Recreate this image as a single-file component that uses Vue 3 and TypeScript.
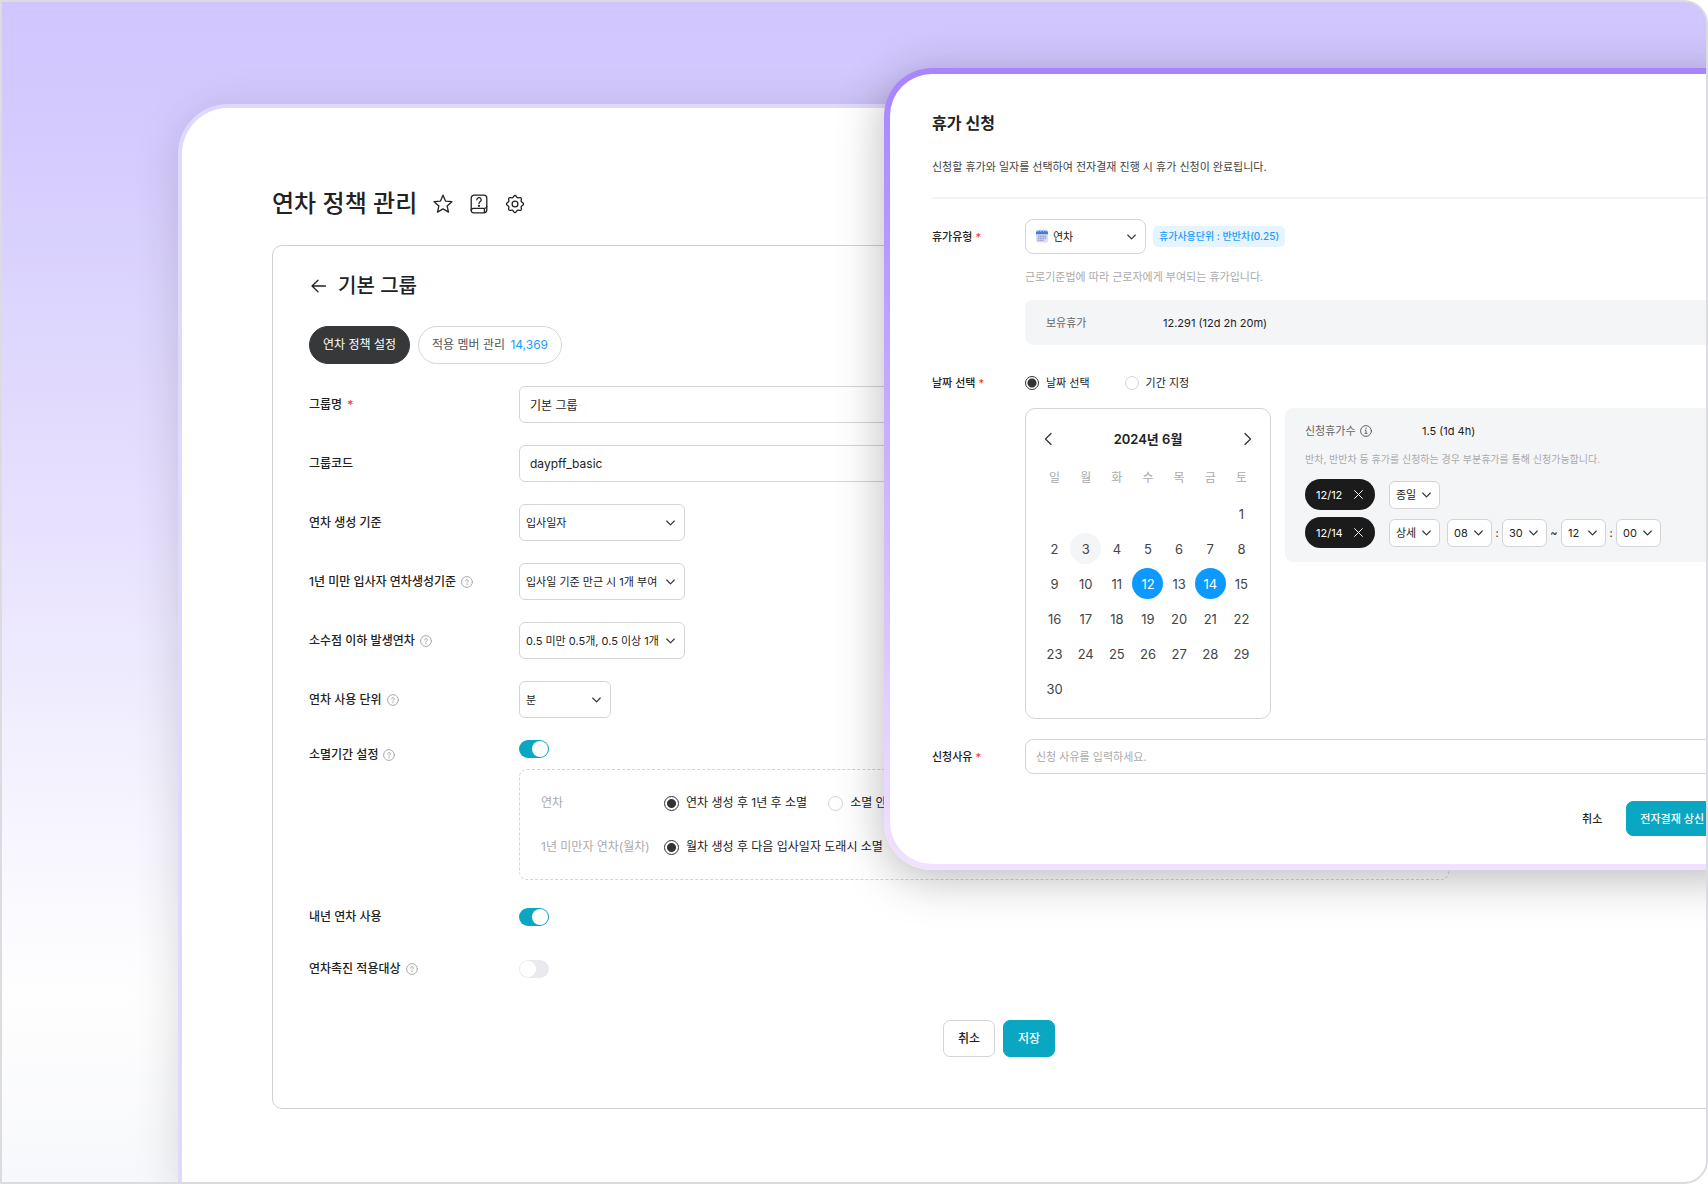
<script setup lang="ts">
import { ref } from 'vue'

interface SelectRow {
  id: string
  label: string
  value: string
  size: string
  help: boolean
}

interface DayCell {
  day: number
  state: '' | 'today' | 'picked'
}

const groupName = ref('기본 그룹')
const groupCode = ref('daypff_basic')
const expiry = ref(true)
const nextYear = ref(true)
const promotion = ref(false)
const reason = ref('')

const selectRows: SelectRow[] = [
  { id: 'basis', label: '연차 생성 기준', value: '입사일자', size: 'wide', help: false },
  { id: 'first-year', label: '1년 미만 입사자 연차생성기준', value: '입사일 기준 만근 시 1개 부여', size: 'wide', help: true },
  { id: 'decimal', label: '소수점 이하 발생연차', value: '0.5 미만 0.5개, 0.5 이상 1개', size: 'wide', help: true },
  { id: 'unit', label: '연차 사용 단위', value: '분', size: 'narrow', help: true },
]

// Outline of the settings gear: a circle whose radius swells into eight soft teeth.
const gearPoints: string[] = []
for (let step = 0; step < 96; step++) {
  const angle = (step / 96) * Math.PI * 2
  const radius = 7.6 + 0.9 * Math.cos(8 * angle)
  gearPoints.push(`${(10 + radius * Math.cos(angle)).toFixed(2)},${(10 + radius * Math.sin(angle)).toFixed(2)}`)
}
const gear = gearPoints.join(' ')

const weekdays = ['일', '월', '화', '수', '목', '금', '토']
const today = 3
const picked = [12, 14]

const weeks: (DayCell | null)[][] = []
for (let start = -5; start <= 30; start += 7) {
  const week: (DayCell | null)[] = []
  for (let day = start; day < start + 7; day++) {
    week.push(
      day < 1 || day > 30
        ? null
        : { day, state: picked.includes(day) ? 'picked' : day === today ? 'today' : '' },
    )
  }
  weeks.push(week)
}
</script>

<template>
  <div class="stage">
    <main class="panel">
      <header class="page-head">
        <h1>연차 정책 관리</h1>
        <button type="button" class="icon-btn" aria-label="즐겨찾기">
          <svg width="20" height="20" viewBox="0 0 20 20">
            <path d="M10 1.200l2.500 5.900 6.400.6-4.800 4.200 1.400 6.200L10 14.900 4.500 18.100l1.400-6.200L1.100 7.700l6.400-.6z" />
          </svg>
        </button>
        <button type="button" class="icon-btn" aria-label="도움말">
          <svg width="20" height="20" viewBox="0 0 20 20">
            <path d="M5.200 1.200h9.600a3 3 0 0 1 3 3v11.600a3 3 0 0 1-3 3H4.400a2.200 2.200 0 0 1-2.200-2.200V4.200a3 3 0 0 1 3-3z" />
            <path d="M2.200 16.600a2.200 2.200 0 0 1 2.200-2.200h10.800a2.600 2.600 0 0 0 2.600-2M15.400 14.500v4" />
            <path d="M7.800 5.800a2.200 2.200 0 1 1 3.300 1.900c-.8.500-1.100.8-1.100 1.700" />
            <circle cx="10" cy="11.800" r=".5" fill="#222" />
          </svg>
        </button>
        <button type="button" class="icon-btn" aria-label="설정">
          <svg width="20" height="20" viewBox="0 0 20 20">
            <polygon :points="gear" />
            <circle cx="10" cy="10" r="2.900" />
          </svg>
        </button>
      </header>

      <section class="card">
        <div class="card-head">
          <button type="button" class="icon-btn" aria-label="뒤로">
            <svg width="18" height="18" viewBox="0 0 18 18"><path d="M16.500 9H3M9 3.200L3 9l6 5.800" /></svg>
          </button>
          <h2>기본 그룹</h2>
        </div>

        <nav class="tabs">
          <button type="button" class="tab active">연차 정책 설정</button>
          <button type="button" class="tab">적용 멤버 관리 <span class="count">14,369</span></button>
        </nav>

        <form class="form" @submit.prevent>
          <div class="row">
            <label for="group-name">그룹명 <span class="req">*</span></label>
            <input id="group-name" v-model="groupName" type="text" class="field" />
          </div>
          <div class="row">
            <label for="group-code">그룹코드</label>
            <input id="group-code" v-model="groupCode" type="text" class="field" />
          </div>
          <div v-for="item in selectRows" :key="item.id" class="row">
            <label :for="item.id">
              {{ item.label }}
              <svg v-if="item.help" class="help" width="12" height="12" viewBox="0 0 12 12">
                <circle cx="6" cy="6" r="5.400" />
                <path d="M4.700 5a1.300 1.300 0 1 1 1.900 1.100c-.5.300-.6.500-.6.900M6 8.200v.7" />
              </svg>
            </label>
            <span class="select" :class="item.size">
              <select :id="item.id"><option>{{ item.value }}</option></select>
              <svg class="chev" width="9" height="6" viewBox="0 0 10 6"><path d="M.8.800L5 5 9.200.800" /></svg>
            </span>
          </div>

          <div class="row top">
            <label for="expiry">
              소멸기간 설정
              <svg class="help" width="12" height="12" viewBox="0 0 12 12">
                <circle cx="6" cy="6" r="5.400" />
                <path d="M4.700 5a1.300 1.300 0 1 1 1.900 1.100c-.5.300-.6.500-.6.900M6 8.200v.7" />
              </svg>
            </label>
            <div class="stack">
              <input id="expiry" v-model="expiry" type="checkbox" role="switch" class="toggle" />
              <div class="expiry-box">
                <div class="expiry-row" role="radiogroup" aria-label="연차">
                  <span class="expiry-name">연차</span>
                  <label class="radio"><input type="radio" name="annual" checked />연차 생성 후 1년 후 소멸</label>
                  <label class="radio"><input type="radio" name="annual" />소멸 안함</label>
                </div>
                <div class="expiry-row" role="radiogroup" aria-label="월차">
                  <span class="expiry-name">1년 미만자 연차(월차)</span>
                  <label class="radio"><input type="radio" name="monthly" checked />월차 생성 후 다음 입사일자 도래시 소멸</label>
                </div>
              </div>
            </div>
          </div>

          <div class="row switch-row">
            <label for="next-year">내년 연차 사용</label>
            <input id="next-year" v-model="nextYear" type="checkbox" role="switch" class="toggle" />
          </div>
          <div class="row switch-row">
            <label for="promotion">
              연차촉진 적용대상
              <svg class="help" width="12" height="12" viewBox="0 0 12 12">
                <circle cx="6" cy="6" r="5.400" />
                <path d="M4.700 5a1.300 1.300 0 1 1 1.900 1.100c-.5.300-.6.500-.6.900M6 8.200v.7" />
              </svg>
            </label>
            <input id="promotion" v-model="promotion" type="checkbox" role="switch" class="toggle" />
          </div>

          <div class="actions">
            <button type="button" class="btn">취소</button>
            <button type="submit" class="btn primary">저장</button>
          </div>
        </form>
      </section>
    </main>

    <section class="modal" role="dialog" aria-labelledby="modal-title">
      <h2 id="modal-title">휴가 신청</h2>
      <p class="lead">신청할 휴가와 일자를 선택하여 전자결재 진행 시 휴가 신청이 완료됩니다.</p>
      <hr />

      <form @submit.prevent>
        <div class="m-row type-row">
          <label for="leave-type" class="m-label">휴가유형<span class="req">*</span></label>
          <div class="m-body">
            <div class="type-line">
              <span class="select type">
                <svg class="emoji" width="14" height="14" viewBox="0 0 14 14">
                  <rect x="1" y="2" width="12" height="11.500" rx="2" fill="#dcdcf2" />
                  <path d="M1 5.200V3.500A2 2 0 0 1 3 1.500h8a2 2 0 0 1 2 2v1.700z" fill="#3f7fe0" />
                  <path d="M3 1v1.600M5.600 1v1.600M8.400 1v1.600M11 1v1.600" stroke="#b9c6e6" stroke-width=".8" />
                  <path d="M3.200 7.200h7.800M3.200 9.200h7.800M3.200 11.200h5.200" stroke="#8188c4" stroke-width="1" stroke-dasharray="1 1.200" />
                </svg>
                <select id="leave-type"><option>연차</option></select>
                <svg class="chev" width="9" height="6" viewBox="0 0 10 6"><path d="M.8.800L5 5 9.200.800" /></svg>
              </span>
              <span class="badge">휴가사용단위 : 반반차(0.25)</span>
            </div>
            <p class="hint">근로기준법에 따라 근로자에게 부여되는 휴가입니다.</p>
            <dl class="balance">
              <dt>보유휴가</dt>
              <dd>12.291 (12d 2h 20m)</dd>
            </dl>
          </div>
        </div>

        <div class="m-row date-row">
          <span id="date-label" class="m-label short">날짜 선택<span class="req">*</span></span>
          <div class="m-body">
            <div class="date-mode" role="radiogroup" aria-labelledby="date-label">
              <label class="radio"><input type="radio" name="mode" checked />날짜 선택</label>
              <label class="radio"><input type="radio" name="mode" />기간 지정</label>
            </div>
            <div class="date-area">
              <div class="calendar">
                <div class="cal-head">
                  <button type="button" aria-label="이전 달">
                    <svg width="8" height="14" viewBox="0 0 8 14"><path d="M7 1.500L1.500 7 7 12.500" /></svg>
                  </button>
                  <strong>2024년 6월</strong>
                  <button type="button" aria-label="다음 달">
                    <svg width="8" height="14" viewBox="0 0 8 14"><path d="M1 1.500L6.500 7 1 12.500" /></svg>
                  </button>
                </div>
                <table>
                  <thead>
                    <tr><th v-for="name in weekdays" :key="name" scope="col">{{ name }}</th></tr>
                  </thead>
                  <tbody>
                    <tr v-for="(week, w) in weeks" :key="w">
                      <td v-for="(cell, d) in week" :key="d">
                        <button v-if="cell" type="button" class="day" :class="cell.state">{{ cell.day }}</button>
                      </td>
                    </tr>
                  </tbody>
                </table>
              </div>

              <div class="summary">
                <dl>
                  <dt>
                    신청휴가수
                    <svg class="info" width="12" height="12" viewBox="0 0 12 12">
                      <circle cx="6" cy="6" r="5.400" />
                      <path d="M5.200 5.300H6v3M5 8.400h2M6 3.100v.8" />
                    </svg>
                  </dt>
                  <dd>1.5 (1d 4h)</dd>
                </dl>
                <p>반차, 반반차 등 휴가를 신청하는 경우 부분휴가를 통해 신청가능합니다.</p>
                <div class="slot">
                  <button type="button" class="chip">
                    12/12<svg width="9" height="9" viewBox="0 0 9 9"><path d="M.6.600l7.800 7.800M8.400.600L.6 8.400" /></svg>
                  </button>
                  <span class="select mini kind">
                    <select aria-label="12/12 구분"><option>종일</option></select>
                    <svg class="chev" width="9" height="6" viewBox="0 0 10 6"><path d="M.8.800L5 5 9.200.800" /></svg>
                  </span>
                </div>
                <div class="slot">
                  <button type="button" class="chip">
                    12/14<svg width="9" height="9" viewBox="0 0 9 9"><path d="M.6.600l7.800 7.800M8.400.600L.6 8.400" /></svg>
                  </button>
                  <span class="select mini kind">
                    <select aria-label="12/14 구분"><option>상세</option></select>
                    <svg class="chev" width="9" height="6" viewBox="0 0 10 6"><path d="M.8.800L5 5 9.200.800" /></svg>
                  </span>
                  <span class="select mini">
                    <select aria-label="시작 시"><option>08</option></select>
                    <svg class="chev" width="9" height="6" viewBox="0 0 10 6"><path d="M.8.800L5 5 9.200.800" /></svg>
                  </span>
                  <span class="sep">:</span>
                  <span class="select mini">
                    <select aria-label="시작 분"><option>30</option></select>
                    <svg class="chev" width="9" height="6" viewBox="0 0 10 6"><path d="M.8.800L5 5 9.200.800" /></svg>
                  </span>
                  <span class="sep tilde">~</span>
                  <span class="select mini">
                    <select aria-label="종료 시"><option>12</option></select>
                    <svg class="chev" width="9" height="6" viewBox="0 0 10 6"><path d="M.8.800L5 5 9.200.800" /></svg>
                  </span>
                  <span class="sep">:</span>
                  <span class="select mini">
                    <select aria-label="종료 분"><option>00</option></select>
                    <svg class="chev" width="9" height="6" viewBox="0 0 10 6"><path d="M.8.800L5 5 9.200.800" /></svg>
                  </span>
                </div>
              </div>
            </div>
          </div>
        </div>

        <div class="m-row reason-row">
          <label for="reason" class="m-label">신청사유<span class="req">*</span></label>
          <input id="reason" v-model="reason" type="text" class="field" placeholder="신청 사유를 입력하세요." />
        </div>

        <div class="m-actions">
          <button type="button" class="btn plain">취소</button>
          <button type="submit" class="btn primary">전자결재 상신</button>
        </div>
      </form>
    </section>
  </div>
</template>

<style>
body {
  margin: 0;
  background: #fff;
}
</style>

<style scoped>
.stage,
.stage * {
  box-sizing: border-box;
}

.stage {
  position: relative;
  display: flex;
  min-height: 100vh;
  padding: 102px 0 0 176px;
  overflow: hidden;
  border: 2px solid #dcdce0;
  border-radius: 0 24px 24px 0;
  background: linear-gradient(180deg, #d0c5fe 0%, #d5cbfe 12%, #dcd5fd 25%, #e5defe 40%, #eeeafe 56%, #f7f5fe 70%, #fefefe 84%, #f7f8fb 100%);
  color: #222;
  font-family: Inter, 'Noto Sans CJK KR', sans-serif;
  font-size: 12px;
  line-height: 18px;
}

h1,
h2,
p,
dl,
dd {
  margin: 0;
}

button,
input,
select {
  margin: 0;
  font: inherit;
  color: inherit;
}

button {
  padding: 0;
  border: 0;
  background: none;
  cursor: pointer;
}

svg {
  display: block;
  flex: none;
  fill: none;
  stroke: #222;
  stroke-width: 1.3;
  stroke-linecap: round;
  stroke-linejoin: round;
}

.panel {
  flex: 1 0 auto;
  width: 100%;
  margin-right: -114px;
  padding: 80px 90px 73px;
  border: 4px solid #e0d9fd;
  border-bottom: 0;
  border-radius: 50px 0 0 0;
  background: #fff;
  box-shadow: 0 8px 48px rgba(0, 0, 0, 0.14);
}

.page-head {
  display: flex;
  align-items: center;
  gap: 16px;
  height: 32px;
}

.page-head h1 {
  font-size: 24px;
  font-weight: 500;
  line-height: 32px;
}

.card {
  margin-top: 25px;
  padding: 26px 36px 51px;
  border: 1px solid #d0d0d4;
  border-radius: 10px;
}

.card-head {
  display: flex;
  align-items: center;
  gap: 11px;
  height: 28px;
}

.card-head h2 {
  font-size: 20px;
  font-weight: 500;
  line-height: 28px;
}

.tabs {
  display: flex;
  gap: 8px;
  margin-top: 26px;
}

.tab {
  height: 38px;
  padding: 0 13px;
  border: 1px solid #d6d6da;
  border-radius: 19px;
  color: #555;
}

.tab.active {
  border-color: #373839;
  background: #373839;
  color: #fff;
}

.count {
  margin-left: 2px;
  color: #1a9cff;
}

.form {
  display: flex;
  flex-direction: column;
  margin-top: 22px;
}

.row {
  display: flex;
  align-items: center;
  margin-bottom: 22px;
}

.row > label {
  display: flex;
  flex: none;
  align-items: center;
  gap: 5px;
  width: 210px;
  font-weight: 500;
}

.help,
.info {
  stroke: #aaa;
  stroke-width: 1;
}

.info {
  stroke: #666;
}

.req {
  color: #f33;
}

.field {
  width: 930px;
  height: 37px;
  padding: 0 10px;
  border: 1px solid #d4d4d7;
  border-radius: 6px;
  background: #fff;
}

.field::placeholder {
  color: #aaa;
}

.select {
  position: relative;
  display: block;
  flex: none;
  height: 37px;
  font-size: 11px;
}

.select select {
  width: 100%;
  height: 100%;
  padding: 0 0 0 6px;
  border: 1px solid #d4d4d7;
  border-radius: 6px;
  background: #fff;
  appearance: none;
}

.chev {
  position: absolute;
  top: calc(50% - 3px);
  right: 10px;
  stroke: #333;
  pointer-events: none;
}

.wide {
  width: 166px;
}

.narrow {
  width: 92px;
}

.top {
  align-items: flex-start;
  margin-bottom: 25px;
}

.top > label {
  height: 30px;
}

.toggle {
  display: block;
  width: 30px;
  height: 18px;
  padding: 1px;
  border-radius: 9px;
  background: #eaeaee;
  appearance: none;
}

.toggle::before {
  display: block;
  width: 16px;
  height: 16px;
  border-radius: 50%;
  background: #fff;
  content: '';
}

.toggle:checked {
  background: #0aa7c2;
}

.toggle:checked::before {
  margin-left: 12px;
}

.expiry-box {
  display: flex;
  flex-direction: column;
  gap: 24px;
  width: 930px;
  margin-top: 11px;
  padding: 23px 21px 22px;
  border: 1px dashed #d4d4d7;
  border-radius: 8px;
}

.expiry-row {
  display: flex;
  align-items: center;
  height: 20px;
}

.expiry-name {
  width: 123px;
  color: #aaa;
}

.radio {
  display: flex;
  align-items: center;
  gap: 7px;
  margin-right: 21px;
}

.radio input {
  width: 15px;
  height: 15px;
  border: 1px solid #d4d4d7;
  border-radius: 50%;
  background: #fff;
  appearance: none;
}

.radio input:checked {
  border-color: #333;
  background: radial-gradient(circle, #333 4px, #fff 5px);
}

.switch-row {
  height: 24px;
  margin-bottom: 28px;
}

.actions {
  display: flex;
  justify-content: center;
  gap: 8px;
  margin-top: 11px;
}

.btn {
  height: 37px;
  padding: 0 14px;
  border: 1px solid #d4d4d7;
  border-radius: 7px;
  background: #fff;
  font-weight: 500;
}

.btn.primary {
  border-color: #0aa7c2;
  background: #0aa7c2;
  color: #fff;
}

.modal {
  position: absolute;
  top: 66px;
  right: -60px;
  left: 882px;
  padding: 37px 42px 28px;
  border: 6px solid transparent;
  border-radius: 48px;
  background:
    linear-gradient(#fff, #fff) padding-box,
    linear-gradient(180deg, #a685ff, #f1e2ff) border-box;
  box-shadow: 0 8px 48px rgba(0, 0, 0, 0.28);
  font-size: 11px;
}

.modal h2 {
  font-size: 16px;
  font-weight: 600;
  line-height: 24px;
}

.lead {
  margin-top: 23px;
  color: #444;
}

hr {
  height: 2px;
  margin: 21px 0 20px;
  border: 0;
  background: #f3f4f5;
}

.m-row {
  display: flex;
}

.m-label {
  display: flex;
  flex: none;
  align-items: center;
  gap: 3px;
  width: 93px;
  height: 35px;
  font-weight: 500;
}

.m-label.short {
  height: 20px;
}

.m-body {
  flex: 1;
}

.type-line {
  display: flex;
  align-items: center;
  gap: 7px;
}

.type {
  width: 121px;
  height: 35px;
}

.type select {
  padding-left: 27px;
  border-radius: 8px;
}

.emoji {
  position: absolute;
  top: 10px;
  left: 10px;
  stroke: none;
  pointer-events: none;
}

.badge {
  height: 21px;
  padding: 0 6px;
  border-radius: 5px;
  background: #e6f4ff;
  color: #1a9cff;
  font-size: 10px;
  font-weight: 500;
  line-height: 21px;
}

.hint {
  margin-top: 14px;
  color: #aaa;
}

.balance {
  display: flex;
  align-items: center;
  height: 45px;
  margin-top: 14px;
  padding: 0 21px;
  border-radius: 8px;
  background: #f4f5f7;
}

dt {
  display: flex;
  align-items: center;
  gap: 4px;
  width: 117px;
  color: #666;
}

.date-row {
  margin-top: 28px;
}

.date-mode {
  display: flex;
  height: 20px;
}

.date-mode .radio {
  margin-right: 35px;
}

.date-mode input {
  width: 14px;
  height: 14px;
}

.date-area {
  display: flex;
  align-items: flex-start;
  gap: 14px;
  margin-top: 15px;
}

.calendar {
  flex: none;
  width: 246px;
  padding: 20px 13px 12px;
  border: 1px solid #d4d4d7;
  border-radius: 10px;
}

.cal-head {
  display: flex;
  align-items: center;
  justify-content: space-between;
  height: 20px;
  padding: 0 5px;
  font-size: 13px;
}

.cal-head strong {
  font-weight: 600;
}

.cal-head svg {
  stroke: #333;
}

table {
  width: 100%;
  margin-top: 10px;
  border-collapse: collapse;
  table-layout: fixed;
}

th,
td {
  height: 35px;
  padding: 0;
  text-align: center;
}

th {
  height: 37px;
  color: #aaa;
  font-size: 12px;
  font-weight: 400;
}

.day {
  display: block;
  width: 31px;
  height: 31px;
  margin: 0 auto;
  border-radius: 50%;
  color: #444;
  font-size: 13px;
}

.day.today {
  background: #f4f5f7;
}

.day.picked {
  background: #0d99ff;
  color: #fff;
}

.summary {
  flex: 1;
  padding: 14px 20px;
  border-radius: 8px;
  background: #f4f5f7;
}

.summary dl {
  display: flex;
}

.summary p {
  margin: 10px 0 11px;
  color: #aaa;
  font-size: 10px;
}

.slot {
  display: flex;
  align-items: center;
  height: 31px;
}

.slot + .slot {
  margin-top: 7px;
}

.chip {
  display: flex;
  align-items: center;
  justify-content: space-between;
  width: 70px;
  height: 31px;
  margin-right: 14px;
  padding: 0 12px 0 11px;
  border-radius: 16px;
  background: #1b1b1b;
  color: #fff;
}

.chip svg {
  stroke: #fff;
  stroke-width: 1;
}

.mini {
  width: 45px;
  height: 28px;
}

.mini .chev {
  right: 9px;
}

.kind {
  width: 51px;
  margin-right: 7px;
}

.sep {
  width: 10px;
  text-align: center;
}

.tilde {
  width: 14px;
}

.reason-row {
  margin-top: 20px;
}

.reason-row .field {
  flex: 1;
  width: auto;
  height: 35px;
  border-radius: 8px;
}

.m-actions {
  display: flex;
  justify-content: flex-end;
  gap: 10px;
  margin-top: 27px;
}

.m-actions .btn {
  height: 35px;
  padding: 0 13px;
}

.btn.plain {
  border-color: transparent;
}
</style>
